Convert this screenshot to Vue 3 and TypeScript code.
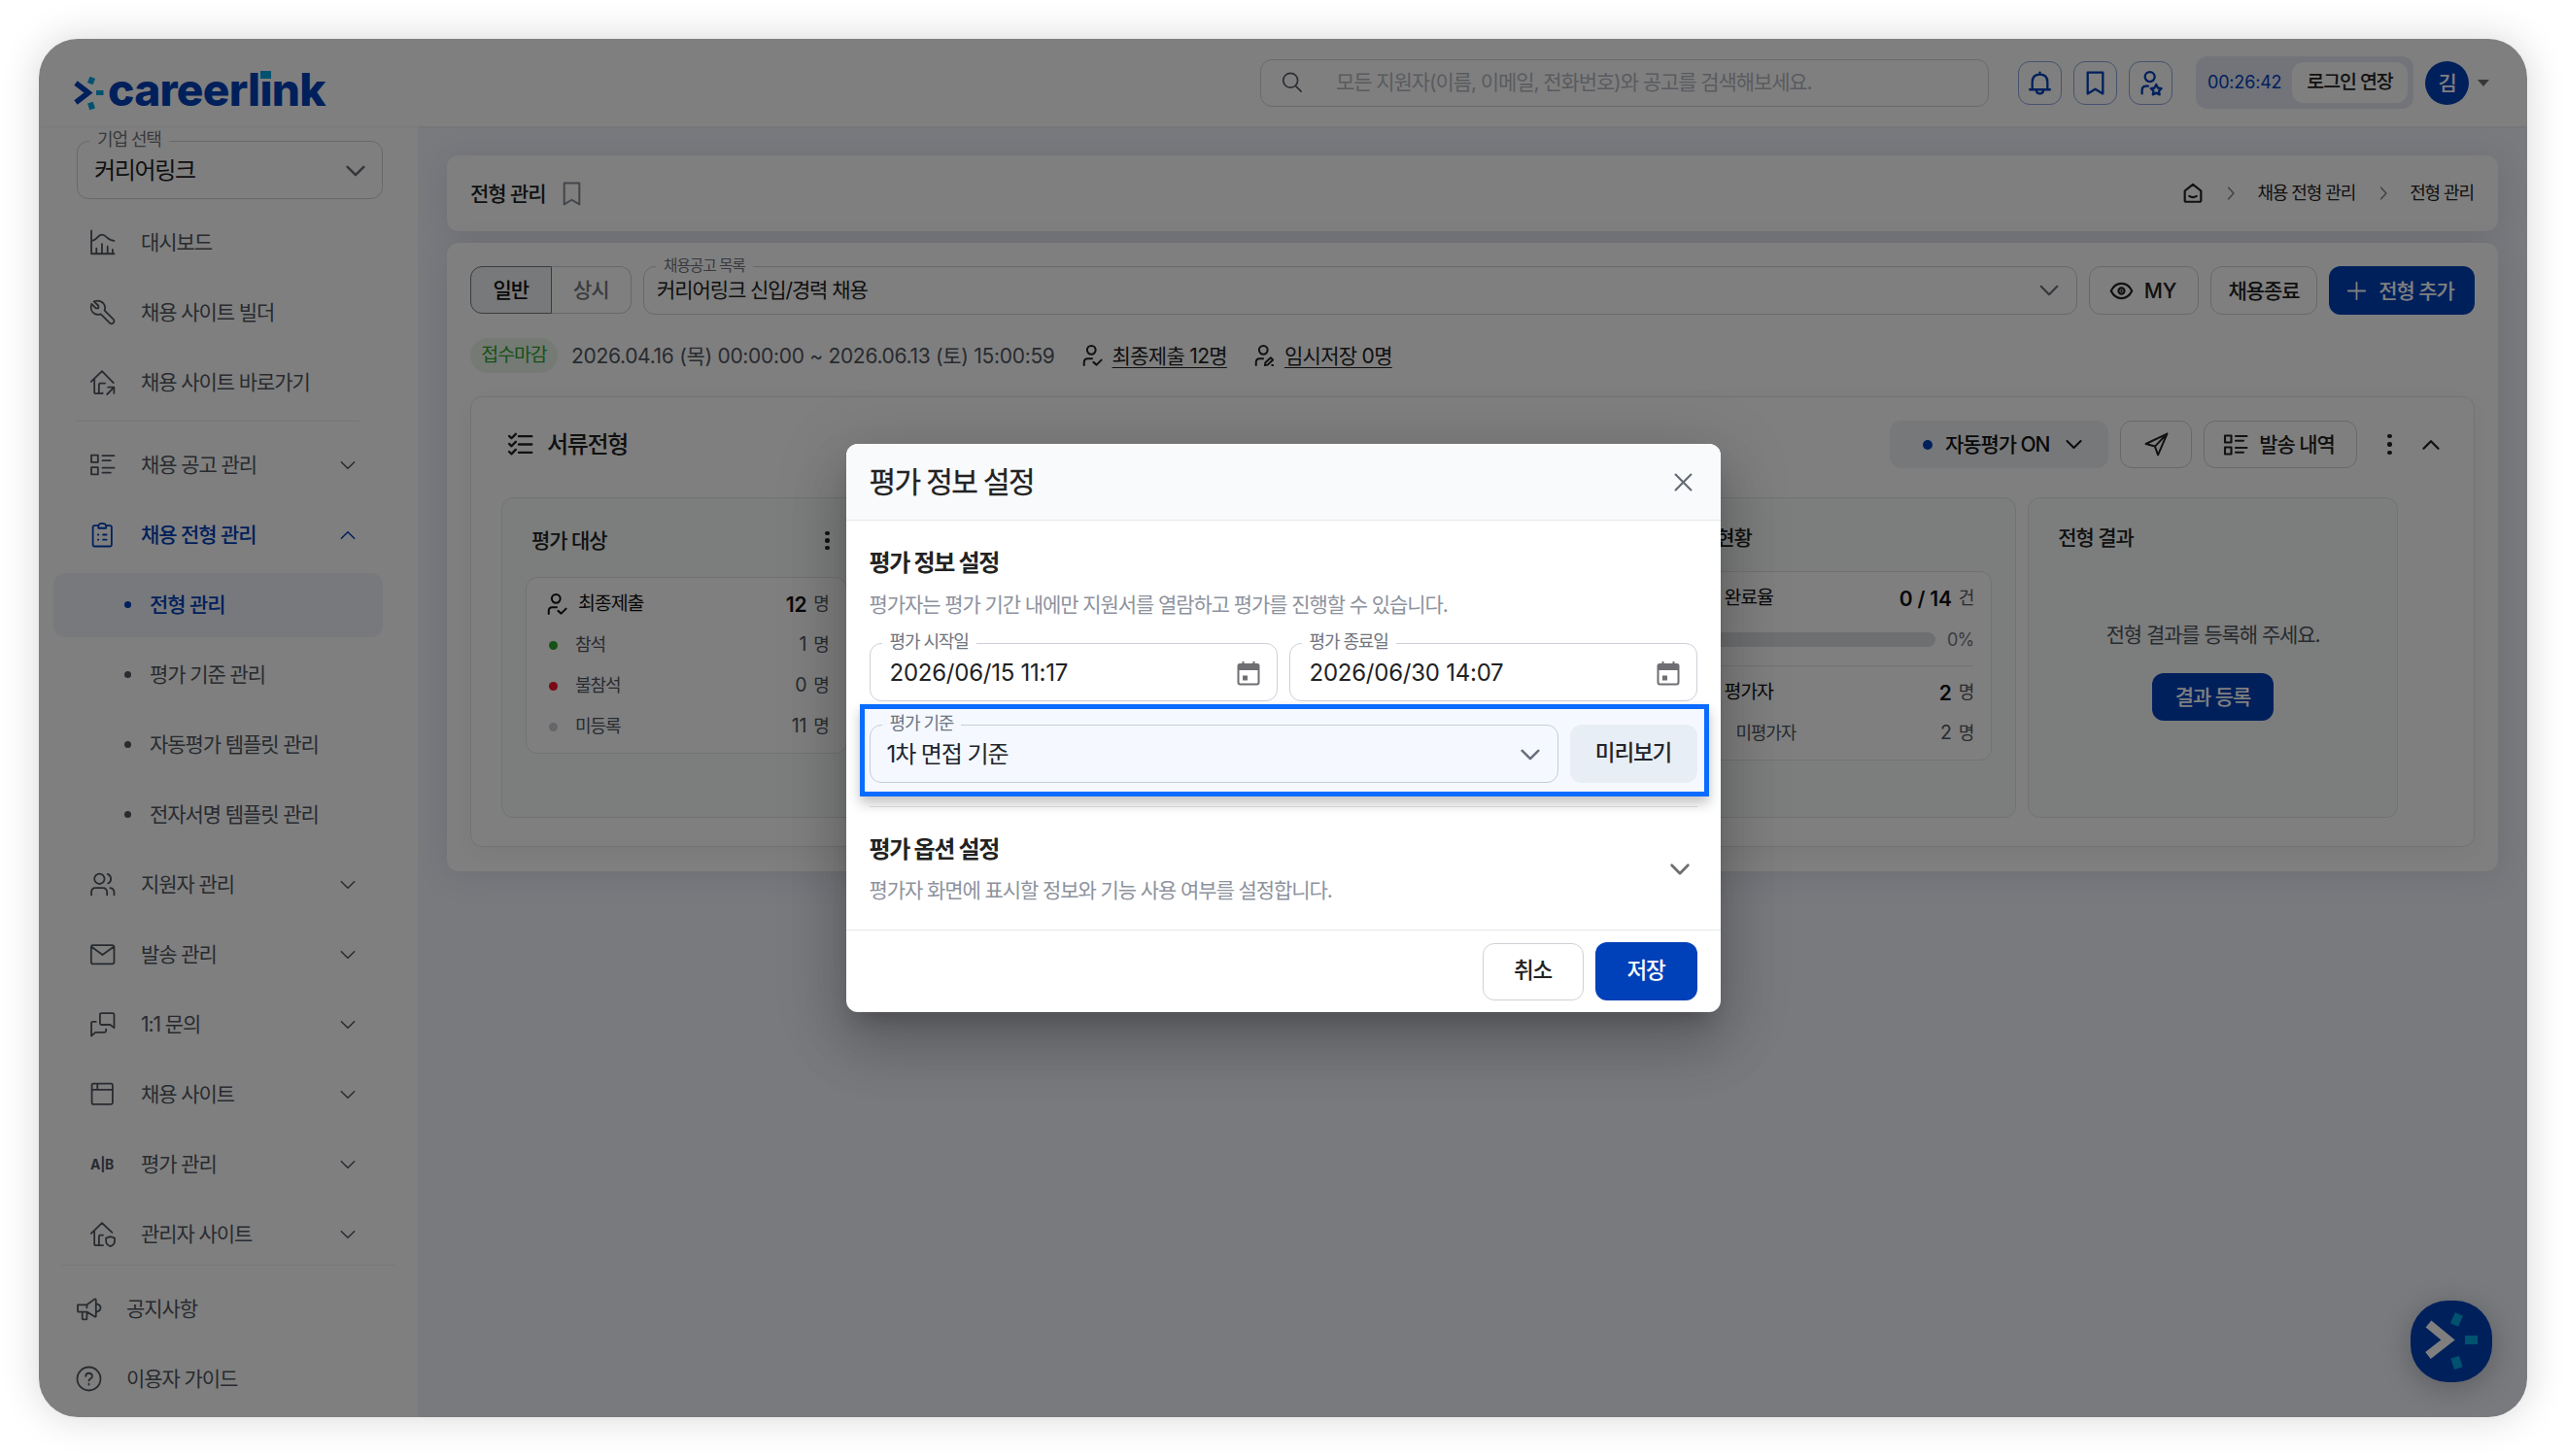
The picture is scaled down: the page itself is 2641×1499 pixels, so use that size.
<script setup lang="ts">
import { h } from 'vue'

interface MenuItem {
  label: string
  icon?: string
  arrow?: 'down' | 'up'
  active?: boolean
}

const icons: Record<string, string> = {
  chart: 'M1 .5V23.300H23.500M1.500 10.500C6 10.500 7 4.500 11.500 4.500S17 10.500 23.500 10.500M6 23V18M11.500 23V13.500M17 23V16M22 23V19',
  wrench: 'M3.500 1.200L8 5.500V8H5.500L1.200 3.800C-.2 8 1 12 4.500 13.600C6.500 14.500 8.600 14.500 10.300 13.800L19 22.500C20 23.500 21.700 23.500 22.700 22.500C23.700 21.500 23.700 19.800 22.700 18.900L14 10.200C14.900 8 14.700 5.500 13 3.300C10.600 .6 7 0 3.500 1.200Z',
  homeLink: 'M.8 11.500L11.500 1L22.800 12.500M4 9V21.500Q4 23.200 5.500 23.200H12V22.500M8.500 23V14.500Q8.500 13 10 13H14.500M16.500 24L23 17.300M17.500 17H23.400V23',
  list: 'M1 2.500H7.500V9.500H1ZM1 14.500H7.500V21.500H1ZM12 3H23.500M12 7.800H20M12 15H23.500M12 19.800H20',
  clipboard: 'M8 3H4Q2.500 3 2.500 4.500V22Q2.500 23.500 4 23.500H19.500Q21 23.500 21 22V4.500Q21 3 19.500 3H15.500M8 3.300Q8 .8 11.750 .8T15.500 3.300V5.500H8ZM7.500 12H8M12.500 12H16M7.500 17H8M12.500 17H16',
  users: 'M14 6.500A5 5 0 1 1 4 6.500A5 5 0 0 1 14 6.500ZM1 22.500V20Q1 15.500 5 15.500H12Q16.500 15.500 16.500 20V22.500M17 1.800A5 5 0 0 1 17.500 11M19.500 15.500Q23.500 16 23.500 20V22.500',
  mail: 'M2.500 3H21.500Q23.500 3 23.500 5V19.500Q23.500 21.500 21.500 21.500H2.500Q.8 21.500 .8 19.500V5Q.8 3 2.500 3ZM1.200 4.500L12 12.500L23 4.500',
  chat: 'M11 1H22Q23.500 1 23.500 2.500V15.500L19.500 12.500H11Q9.500 12.500 9.500 11V2.500Q9.500 1 11 1ZM5.500 9.500H2.500Q1 9.500 1 11V23.500L5 20H14Q15.500 20 15.500 18.500V17',
  windowed: 'M3 1.500H20.500Q22 1.500 22 3V20.500Q22 22 20.500 22H3Q1.500 22 1.500 20.500V3Q1.500 1.500 3 1.500ZM1.500 7.500H22M7 1.500V7.500',
  homeShield: 'M.8 11.500L11.500 1L21.500 10.500M4 9V21.500Q4 23.200 5.500 23.200H12.500M8.500 23V14.500Q8.500 13 10 13H12.500M15.500 16L19.800 14.500L24 16V19Q24 22.500 19.800 24.200Q15.500 22.500 15.500 19Z',
  speaker: 'M1 8H10L17.500 2.500Q19 1.800 19 3.500V19Q19 20.500 17.500 19.500L10 15H2Q1 15 1 14ZM5.500 15V21.500Q5.500 22.500 6.500 22.500H9Q10 22.500 10 21.500V15M10 8V11M19.500 7Q23.500 8 23.500 11T19.500 15',
  help: 'M23.500 12A11.500 11.500 0 1 1 .5 12A11.500 11.500 0 0 1 23.500 12ZM8.800 9.500Q9 6.500 12 6.500T15.300 9.300Q15.300 11 13.500 12Q12 13 12 14M12 17V17.800',
  bell: 'M2 18.500H22M4.500 18.500V11Q4.500 3.500 12 3.500T19.500 11V18.500M12 1.500V3.500M8.500 19Q8.500 22.500 12 22.500T15.500 19',
  bookmark: 'M4.500 1.500H19.500V22.500L12 18L4.500 22.500Z',
  userStar: 'M16 5.800A4.800 4.800 0 1 1 6.400 5.800A4.800 4.800 0 0 1 16 5.800ZM3.500 22.500V19Q3.500 15 8 15H9.500M17.500 13.500L19.200 16.800L22.800 17.300L20.200 19.800L20.800 23.400L17.500 21.700L14.200 23.400L14.800 19.800L12.200 17.300L15.800 16.800Z',
  userCheck: 'M16 5.800A4.800 4.800 0 1 1 6.400 5.800A4.800 4.800 0 0 1 16 5.800ZM3 23V19.500Q3 15.500 7 15.500H12M13.500 19.500L17 22.500L22.500 17',
  userEdit: 'M16 5.800A4.800 4.800 0 1 1 6.400 5.800A4.800 4.800 0 0 1 16 5.800ZM3 23V19.500Q3 15.500 7 15.500H11M13 23L13.500 20L19.500 14.500L22 17L16 22.500ZM21 23H22',
  search: 'M19 10A8.500 8.500 0 1 1 2 10A8.500 8.500 0 0 1 19 10ZM16.500 16.500L23 23',
  home: 'M2 9L12 1L22 9V21Q22 22.500 20.500 22.500H3.500Q2 22.500 2 21ZM7.500 15.500Q12 18.500 16.500 15.500',
  eye: 'M.8 12C6 1.500 18 1.500 23.200 12C18 22.500 6 22.500 .8 12ZM15.200 12A3.200 3.200 0 1 1 8.800 12A3.200 3.200 0 0 1 15.200 12ZM12 11.500V12.500',
  plus: 'M12 1V23M1 12H23',
  checks: 'M1 3.800L3.300 6L7.500 1.800M1 11.500L3.300 13.700L7.500 9.500M1 19.200L3.300 21.400L7.500 17.200M10.500 4H23.300M10.500 12H23.300M10.500 20H23.300',
  send: 'M1.500 11.500L22.500 1.500L13.500 22.500L10.500 14ZM10.500 14L22.500 1.500',
  close: 'M2 2L22 22M22 2L2 22',
  down: 'M2 7L12 17L22 7',
  up: 'M2 17L12 7L22 17',
  right: 'M8 2L17 12L8 22'
}

const Icon = (p: { name: string; size?: number; weight?: number }) => {
  const size = p.size ?? 25
  return h(
    'svg',
    {
      width: size,
      height: size,
      viewBox: '0 0 24 24',
      fill: 'none',
      stroke: 'currentColor',
      'stroke-width': ((p.weight ?? 1.8) * 24) / size,
      'stroke-linecap': 'round',
      'stroke-linejoin': 'round',
      style: { display: 'block', flex: 'none', overflow: 'visible' }
    },
    [h('path', { d: icons[p.name] })]
  )
}
Icon.props = ['name', 'size', 'weight']

const topMenu: MenuItem[] = [
  { label: '대시보드', icon: 'chart' },
  { label: '채용 사이트 빌더', icon: 'wrench' },
  { label: '채용 사이트 바로가기', icon: 'homeLink' }
]
const recruitMenu: MenuItem[] = [
  { label: '채용 공고 관리', icon: 'list', arrow: 'down' },
  { label: '채용 전형 관리', icon: 'clipboard', arrow: 'up', active: true }
]
const subMenu: MenuItem[] = [
  { label: '전형 관리', active: true },
  { label: '평가 기준 관리' },
  { label: '자동평가 템플릿 관리' },
  { label: '전자서명 템플릿 관리' }
]
const manageMenu: MenuItem[] = [
  { label: '지원자 관리', icon: 'users', arrow: 'down' },
  { label: '발송 관리', icon: 'mail', arrow: 'down' },
  { label: '1:1 문의', icon: 'chat', arrow: 'down' },
  { label: '채용 사이트', icon: 'windowed', arrow: 'down' },
  { label: '평가 관리', icon: 'ab', arrow: 'down' },
  { label: '관리자 사이트', icon: 'homeShield', arrow: 'down' }
]
const footMenu: MenuItem[] = [
  { label: '공지사항', icon: 'speaker' },
  { label: '이용자 가이드', icon: 'help' }
]
const attendance = [
  { label: '참석', count: 1, color: '#2da32d' },
  { label: '불참석', count: 0, color: '#f5142d' },
  { label: '미등록', count: 11, color: '#c9ccd3' }
]
const dateFields = [
  { label: '평가 시작일', value: '2026/06/15 11:17' },
  { label: '평가 종료일', value: '2026/06/30 14:07' }
]
</script>

<template>
  <div class="stage">
    <div class="window">
      <header class="header">
        <div class="logo">
          <svg class="logo-mark" width="33" height="36" viewBox="0 0 33 36">
            <path d="M3 7.500L16 17.500L3 27.500" fill="none" stroke="#0040b8" stroke-width="5.500" />
            <g fill="#00a5de">
              <rect x="-3" y="-3.500" width="6" height="7" transform="translate(19 5) rotate(22)" />
              <rect x="24" y="15" width="7.500" height="5" />
              <rect x="-3" y="-3.500" width="6" height="7" transform="translate(19 31) rotate(-18)" />
            </g>
          </svg>
          <span class="logo-text">careerl<span class="logo-i">i</span>nk</span>
        </div>
        <div class="search">
          <Icon name="search" :size="21" :weight="1.7" />
          <span>모든 지원자(이름, 이메일, 전화번호)와 공고를 검색해보세요.</span>
        </div>
        <div class="head-icons">
          <button v-for="n in ['bell', 'bookmark', 'userStar']" :key="n"><Icon :name="n" :size="25" :weight="2.3" /></button>
        </div>
        <div class="timer">
          <span class="time num">00:26:42</span>
          <button>로그인 연장</button>
        </div>
        <div class="avatar">김</div>
        <i class="caret"></i>
      </header>

      <div class="body">
        <aside class="sidebar">
          <div class="menu-scroll">
            <div class="field company">
              <span class="field-label">기업 선택</span>
              <span class="field-value">커리어링크</span>
              <Icon name="down" :size="20" :weight="2.6" />
            </div>
            <nav class="menu">
              <div v-for="m in topMenu" :key="m.label" class="item">
                <Icon :name="m.icon!" /><span>{{ m.label }}</span>
              </div>
              <hr />
              <div v-for="m in recruitMenu" :key="m.label" class="item" :class="{ active: m.active }">
                <Icon :name="m.icon!" /><span>{{ m.label }}</span>
                <Icon class="arrow" :name="m.arrow!" :size="16" :weight="1.5" />
              </div>
              <div v-for="m in subMenu" :key="m.label" class="item sub" :class="{ active: m.active, picked: m.active }">
                <i class="dot"></i><span>{{ m.label }}</span>
              </div>
              <div v-for="m in manageMenu" :key="m.label" class="item">
                <span v-if="m.icon === 'ab'" class="ab">A|B</span>
                <Icon v-else :name="m.icon!" />
                <span>{{ m.label }}</span>
                <Icon class="arrow" :name="m.arrow!" :size="16" :weight="1.5" />
              </div>
            </nav>
          </div>
          <nav class="foot">
            <div v-for="m in footMenu" :key="m.label" class="item">
              <Icon :name="m.icon!" /><span>{{ m.label }}</span>
            </div>
          </nav>
        </aside>

        <main class="main">
          <section class="card crumbs">
            <h1>전형 관리</h1>
            <Icon class="mark" name="bookmark" :size="25" :weight="2" />
            <div class="trail">
              <Icon name="home" :size="20" :weight="2.2" />
              <Icon class="sep" name="right" :size="14" :weight="1.5" />
              <span>채용 전형 관리</span>
              <Icon class="sep" name="right" :size="14" :weight="1.5" />
              <span>전형 관리</span>
            </div>
          </section>

          <section class="card content">
            <div class="toolbar">
              <div class="toggle"><span class="on">일반</span><span>상시</span></div>
              <div class="field posting">
                <span class="field-label">채용공고 목록</span>
                <span class="field-value">커리어링크 신입/경력 채용</span>
                <Icon name="down" :size="20" :weight="2.2" />
              </div>
              <button class="btn my"><Icon name="eye" :size="23" :weight="2.2" /><span class="num">MY</span></button>
              <button class="btn end">채용종료</button>
              <button class="btn primary add"><Icon name="plus" :size="19" :weight="1.8" />전형 추가</button>
            </div>

            <div class="status">
              <span class="badge">접수마감</span>
              <span class="period">2026.04.16 (목) 00:00:00 ~ 2026.06.13 (토) 15:00:59</span>
              <Icon name="userCheck" :size="22" :weight="2" />
              <u>최종제출 12명</u>
              <Icon name="userEdit" :size="22" :weight="2" />
              <u>임시저장 0명</u>
            </div>

            <div class="step">
              <div class="step-head">
                <Icon name="checks" :size="25" :weight="2.4" />
                <h2>서류전형</h2>
                <div class="auto"><i class="dot"></i><span>자동평가 ON</span><Icon name="down" :size="17" :weight="1.9" /></div>
                <button class="btn send"><Icon name="send" :size="25" :weight="2" /></button>
                <button class="btn history"><Icon name="list" :size="24" :weight="2.1" />발송 내역</button>
                <span class="kebab"><i></i><i></i><i></i></span>
                <Icon name="up" :size="18" :weight="2.3" />
              </div>

              <div class="panels">
                <div class="panel">
                  <div class="panel-title tall">평가 대상<span class="kebab small"><i></i><i></i><i></i></span></div>
                  <div class="box">
                    <div class="row lead">
                      <Icon name="userCheck" :size="22" :weight="2" />
                      <span>최종제출</span><strong>12</strong><em>명</em>
                    </div>
                    <div v-for="a in attendance" :key="a.label" class="row">
                      <i class="state" :style="{ background: a.color }"></i>
                      <span>{{ a.label }}</span><strong>{{ a.count }}</strong><em>명</em>
                    </div>
                  </div>
                </div>
                <div class="panel"></div>
                <div class="panel"></div>
                <div class="panel">
                  <div class="panel-title">평가 현황</div>
                  <div class="box">
                    <div class="row lead"><i class="gap"></i><span>완료율</span><strong>0 / 14</strong><em>건</em></div>
                    <div class="row progress"><div class="bar"></div><span class="pct">0%</span></div>
                    <hr />
                    <div class="row lead"><i class="gap"></i><span>평가자</span><strong>2</strong><em>명</em></div>
                    <div class="row"><i class="gap wide"></i><span>미평가자</span><strong>2</strong><em>명</em></div>
                  </div>
                </div>
                <div class="panel result">
                  <div class="panel-title">전형 결과</div>
                  <p>전형 결과를 등록해 주세요.</p>
                  <button class="btn primary">결과 등록</button>
                </div>
              </div>
            </div>
          </section>
        </main>
      </div>

      <div class="fab">
        <svg width="84" height="84" viewBox="0 0 84 84">
          <path d="M18.500 24L38.500 40.500L18 56.500" fill="none" stroke="#fff" stroke-width="9" />
          <g fill="#00a5de">
            <rect x="-4.500" y="-6" width="9" height="12" transform="translate(47.500 19.500) rotate(24)" />
            <rect x="56" y="36" width="13" height="9" />
            <rect x="-4.500" y="-6" width="9" height="12" transform="translate(47.500 64) rotate(-18)" />
          </g>
        </svg>
      </div>

      <div class="backdrop">
        <section class="modal">
          <header class="modal-head"><h2>평가 정보 설정</h2><Icon name="close" :size="19" :weight="2.2" /></header>
          <div class="modal-body">
            <h3>평가 정보 설정</h3>
            <p>평가자는 평가 기간 내에만 지원서를 열람하고 평가를 진행할 수 있습니다.</p>
            <div class="dates">
              <div v-for="d in dateFields" :key="d.label" class="field date">
                <span class="field-label">{{ d.label }}</span>
                <span class="field-value num">{{ d.value }}</span>
                <svg class="calendar" width="24" height="27" viewBox="0 0 24 27">
                  <path d="M3 4H21Q22.500 4 22.500 5.500V22.500Q22.500 24.500 20.500 24.500H3.500Q1.500 24.500 1.500 22.500V5.500Q1.500 4 3 4Z" fill="none" stroke="#6f6f73" stroke-width="2" />
                  <path d="M1.500 4H22.500V10H1.500ZM5.500 1H7.500V5H5.500ZM16.500 1H18.500V5H16.500ZM6 15.500H11V20.500H6Z" fill="#6f6f73" />
                </svg>
              </div>
            </div>
            <div class="criteria">
              <div class="field">
                <span class="field-label">평가 기준</span>
                <span class="field-value">1차 면접 기준</span>
                <Icon name="down" :size="20" :weight="2.6" />
              </div>
              <button class="preview">미리보기</button>
              <div class="focus-ring"></div>
            </div>
            <div class="options">
              <div>
                <h3>평가 옵션 설정</h3>
                <p>평가자 화면에 표시할 정보와 기능 사용 여부를 설정합니다.</p>
              </div>
              <Icon name="down" :size="20" :weight="2.8" />
            </div>
          </div>
          <footer class="modal-foot">
            <button class="cancel">취소</button>
            <button class="save">저장</button>
          </footer>
        </section>
      </div>
    </div>
  </div>
</template>

<style>
body {
  margin: 0;
  background: #fff;
}
</style>

<style scoped>
.stage {
  position: relative;
  box-sizing: border-box;
  width: 2641px;
  height: 1499px;
  padding: 40px;
  background: #fff;
  font-family: Inter, 'Noto Sans CJK KR', sans-serif;
  font-size: 21px;
  line-height: 1;
  letter-spacing: -0.052em;
  color: #222;
  white-space: nowrap;
}
.stage::before {
  content: '';
  position: absolute;
  inset: 40px;
  border-radius: 40px;
  box-shadow: 0 0 40px rgba(0, 0, 0, 0.16);
}
.stage * {
  box-sizing: border-box;
}
h1, h2, h3, p {
  margin: 0;
}
button {
  margin: 0;
  padding: 0;
  border: 0;
  background: none;
  font: inherit;
  letter-spacing: inherit;
  color: inherit;
}
.num {
  letter-spacing: -0.01em;
}
.window {
  position: relative;
  z-index: 1;
  display: flex;
  flex-direction: column;
  width: 2561px;
  height: 1419px;
  border-radius: 40px;
  overflow: hidden;
  background: #fff;
}

/* header */
.header {
  position: relative;
  z-index: 1;
  display: flex;
  align-items: center;
  flex: none;
  height: 90px;
  padding-left: 35px;
  box-shadow: 0 1px 3px rgba(0, 0, 0, 0.06);
}
.header > * {
  flex: none;
}
.logo {
  display: flex;
  align-items: center;
  width: 1222px;
  padding-top: 22px;
}
.logo-text {
  margin: 0 0 8px 3px;
  font-size: 46px;
  font-weight: 800;
  letter-spacing: -0.015em;
  color: #0040b8;
}
.logo-i {
  position: relative;
}
.logo-i::after {
  content: '';
  position: absolute;
  left: 1px;
  top: 9px;
  width: 11px;
  height: 11px;
  background: linear-gradient(#00a5de 8px, #fff 8px);
}
.search {
  display: flex;
  align-items: center;
  width: 750px;
  height: 49px;
  padding: 0 0 1px 21px;
  border: 1px solid #d3d5da;
  border-radius: 12px;
  color: #b4b7bf;
}
.search svg {
  color: #565c68;
}
.search span {
  margin-left: 35px;
}
.head-icons {
  display: flex;
  gap: 12px;
  margin-left: 30px;
  color: #0040b8;
}
.head-icons button {
  display: grid;
  place-items: center;
  width: 45px;
  height: 45px;
  border: 1px solid #8ba6de;
  border-radius: 12px;
}
.timer {
  display: flex;
  align-items: center;
  justify-content: space-between;
  width: 224px;
  height: 54px;
  margin-left: 24px;
  padding: 0 6px 0 12px;
  border-radius: 12px;
  background: #e4e9f5;
}
.time {
  font-size: 18px;
  color: #0040b8;
}
.timer button {
  width: 119px;
  height: 42px;
  border-radius: 12px;
  background: #fff;
  font-size: 19.500px;
  font-weight: 500;
}
.avatar {
  display: grid;
  place-items: center;
  width: 45px;
  height: 45px;
  margin-left: 12px;
  border-radius: 50%;
  background: #0040b8;
  color: #fff;
  font-weight: 500;
}
.caret {
  margin-left: 9px;
  border: 6px solid transparent;
  border-top: 7px solid #707070;
  border-bottom: 0;
}

/* sidebar */
.body {
  display: flex;
  flex: 1;
  min-height: 0;
}
.sidebar {
  display: flex;
  flex-direction: column;
  width: 390px;
  flex: none;
}
.menu-scroll {
  height: 1172px;
  overflow: hidden;
  padding-top: 15px;
}
.field {
  position: relative;
  display: flex;
  align-items: center;
  justify-content: space-between;
  height: 60px;
  padding: 3px 18px 0 17px;
  border: 1px solid #cdd0d8;
  border-radius: 12px;
  font-size: 24px;
}
.field > svg {
  color: #6b6f78;
}
.field-label {
  position: absolute;
  left: 12px;
  top: -11px;
  padding: 0 8px;
  background: #fff;
  font-size: 18px;
  color: #70757f;
}
.company {
  width: 315px;
  margin-left: 39px;
  padding: 1px 17px 0 17px;
}
.company .field-value {
  letter-spacing: -0.056em;
}
.menu {
  display: flex;
  flex-direction: column;
  gap: 6px;
  padding: 12px 36px 0 15px;
}
.menu hr {
  width: 291px;
  height: 1px;
  margin: 0 0 6px 24px;
  border: 0;
  background: #e9eaee;
}
.item {
  display: flex;
  align-items: center;
  flex: none;
  height: 66px;
  padding: 0 28px 1px 38px;
  border-radius: 12px;
  color: #50565f;
}
.item > span {
  margin-left: 27px;
}
.item > span.ab {
  width: 25px;
  margin-left: 0;
  font-size: 14px;
  font-weight: 700;
  letter-spacing: -0.02em;
}
.item .arrow {
  margin-left: auto;
}
.item.active {
  color: #0040b8;
  font-weight: 500;
}
.item.picked {
  background: #f0f2fa;
}
.item.sub {
  padding-left: 73px;
}
.sub .dot {
  width: 7px;
  height: 7px;
  border-radius: 50%;
  background: currentColor;
}
.item.sub span {
  margin-left: 19px;
}
.foot {
  display: flex;
  flex-direction: column;
  gap: 6px;
  margin: 0 24px;
  padding-top: 12px;
  border-top: 1px solid #eeeff2;
}
.foot .item {
  padding-left: 15px;
}
.foot .item > span {
  margin-left: 26px;
}

/* main */
.main {
  flex: 1;
  padding: 30px;
  background: #f1f4fc;
}
.card {
  border-radius: 12px;
  background: #fff;
  box-shadow: 0 4px 34px rgba(50, 56, 75, 0.12);
}
.crumbs {
  display: flex;
  align-items: center;
  height: 78px;
  padding: 0 25px 0 24px;
}
.crumbs h1 {
  font-size: 21px;
  font-weight: 500;
}
.mark {
  margin-left: 15px;
  color: #868b94;
}
.trail {
  display: flex;
  align-items: center;
  margin-left: auto;
  font-size: 18px;
}
.sep {
  margin: 0 20px 0 22px;
  color: #80858e;
}
.content {
  height: 647px;
  margin-top: 12px;
  padding: 24px;
}
.toolbar {
  display: flex;
  gap: 12px;
}
.toggle {
  display: flex;
  width: 166px;
  height: 49px;
}
.toggle span {
  display: grid;
  place-items: center;
  flex: 1;
  border: 1px solid #cfd1d6;
  border-left: 0;
  border-radius: 0 12px 12px 0;
  color: #757983;
  font-weight: 500;
}
.toggle .on {
  border: 1px solid #757983;
  border-radius: 12px 0 0 12px;
  background: #f0f2f6;
  color: #111;
}
.posting {
  flex: 1;
  height: 50px;
  padding: 0 18px 1px 13px;
  font-size: 21px;
}
.posting .field-label {
  font-size: 15.750px;
  top: -9px;
}
.btn {
  display: flex;
  align-items: center;
  justify-content: center;
  height: 50px;
  border: 1px solid #cfd1d6;
  border-radius: 12px;
  font-weight: 500;
}
.btn.primary {
  border: 0;
  background: #0040b8;
  color: #fff;
}
.my {
  width: 113px;
  gap: 12px;
  padding-right: 1px;
}
.end {
  width: 110px;
}
.add {
  width: 150px;
  gap: 13px;
  padding-right: 2px;
}
.status {
  display: flex;
  align-items: center;
  height: 36px;
  margin-top: 24px;
}
.badge {
  display: grid;
  place-items: center;
  width: 90px;
  height: 36px;
  border-radius: 18px;
  background: #eaf5ea;
  color: #2da32d;
  font-size: 19.500px;
}
.period {
  margin-left: 14px;
  color: #50565f;
  letter-spacing: -0.0145em;
}
.status svg {
  margin: 0 10px 0 27px;
}
.status u {
  letter-spacing: -0.033em;
  text-underline-offset: 4px;
  text-decoration-thickness: 1px;
}
.step {
  height: 464px;
  margin-top: 24px;
  padding: 24px 29px 24px 31px;
  border: 1px solid #e3e5ea;
  border-radius: 12px;
  box-shadow: 0 6px 24px rgba(50, 56, 75, 0.06);
}
.step-head {
  display: flex;
  align-items: center;
  height: 49px;
  padding: 0 6px 0 7px;
}
.step-head h2 {
  margin-left: 15px;
  font-size: 24px;
  font-weight: 500;
  letter-spacing: -0.056em;
}
.step-head .btn {
  height: 49px;
  margin-left: 12px;
}
.auto {
  display: flex;
  align-items: center;
  width: 225px;
  height: 49px;
  margin-left: auto;
  padding-left: 34px;
  border-radius: 12px;
  background: #eef0f5;
  color: #111;
  font-weight: 500;
}
.auto .dot {
  width: 10px;
  height: 10px;
  margin-right: 13px;
  border-radius: 50%;
  background: #0040b8;
}
.auto svg {
  margin-left: 17px;
}
.send {
  width: 74px;
}
.history {
  width: 158px;
  gap: 12px;
  padding-right: 2px;
}
.kebab {
  display: flex;
  flex-direction: column;
  align-items: center;
  gap: 4px;
  width: 5px;
  margin: 0 31px;
}
.kebab i {
  width: 4.500px;
  height: 4.500px;
  border-radius: 50%;
  background: #222;
}
.kebab.small {
  gap: 3px;
  margin: 0 18px 0 auto;
}
.panels {
  display: flex;
  gap: 12px;
  width: 1952px;
  height: 330px;
  margin-top: 30px;
}
.panel {
  flex: 1;
  padding: 24px;
  border: 1px solid #e2e5e6;
  border-radius: 12px;
  background: #f9fbfb;
}
.panel-title {
  display: flex;
  align-items: center;
  height: 33px;
  padding-left: 6px;
  margin-bottom: 18px;
  font-weight: 500;
}
.panel-title.tall {
  height: 39px;
}
.box {
  padding: 6px 18px;
  border: 1px solid #e2e4e9;
  border-radius: 12px;
  background: #fff;
}
.row {
  display: flex;
  align-items: center;
  height: 42px;
  font-size: 18px;
  color: #50565f;
}
.row.lead {
  font-size: 19.500px;
  font-weight: 400;
  color: #111;
}
.row > svg {
  margin: 0 11px 0 2px;
}
.state {
  width: 9px;
  height: 9px;
  margin: 0 18px 0 5px;
  border-radius: 50%;
}
.gap {
  width: 36px;
}
.gap.wide {
  width: 48px;
}
.row strong {
  margin-left: auto;
  font-size: 19.500px;
  font-weight: 400;
  letter-spacing: -0.01em;
}
.row.lead strong {
  font-size: 21px;
  font-weight: 600;
}
.row em {
  margin-left: 7px;
  font-style: normal;
  font-size: 18px;
  font-weight: 400;
  color: #50565f;
}
.bar {
  flex: 1;
  height: 15px;
  margin-right: 12px;
  border-radius: 8px;
  background: #dddee2;
}
.pct {
  color: #757983;
  letter-spacing: -0.05em;
}
.progress {
  height: 43px;
}
.box hr {
  height: 1px;
  margin: 5px 0 6px;
  border: 0;
  background: #e2e4e9;
}
.result {
  display: flex;
  flex-direction: column;
}
.result p {
  margin-top: 55px;
  text-align: center;
  color: #50565f;
}
.result .btn {
  width: 125px;
  height: 49px;
  margin: 29px auto 0;
}
.fab {
  position: absolute;
  right: 36px;
  bottom: 36px;
  width: 84px;
  height: 84px;
  border-radius: 38px;
  background: #0040b8;
  box-shadow: 0 6px 30px rgba(0, 0, 0, 0.24);
}

/* dialog */
.backdrop {
  position: absolute;
  inset: 0;
  z-index: 2;
  display: flex;
  align-items: center;
  justify-content: center;
  background: rgba(0, 0, 0, 0.5);
}
.modal {
  width: 900px;
  height: 585px;
  display: flex;
  flex-direction: column;
  border-radius: 12px;
  background: #fff;
  box-shadow: 0 16px 22px -10px rgba(0, 0, 0, 0.2), 0 36px 57px 4px rgba(0, 0, 0, 0.14), 0 14px 69px 12px rgba(0, 0, 0, 0.12);
}
.modal-head {
  display: flex;
  align-items: center;
  justify-content: space-between;
  height: 79px;
  padding: 0 29px 0 24px;
  border-bottom: 1px solid #e5e7eb;
  border-radius: 12px 12px 0 0;
  background: #f9fafc;
}
.modal-head svg {
  color: #656b76;
}
.modal-head h2 {
  font-size: 30px;
  font-weight: 400;
  letter-spacing: -0.054em;
  -webkit-text-stroke: 0.3px currentColor;
}
.modal-body {
  flex: 1;
  padding: 32px 24px 0;
}
.modal h3 {
  font-size: 24px;
  font-weight: 700;
  letter-spacing: -0.053em;
}
.modal p {
  margin-top: 20px;
  color: #8d929d;
}
.dates {
  display: flex;
  gap: 12px;
  margin-top: 29px;
}
.date {
  flex: 1;
  padding: 2px 17px 0 20px;
}
.criteria {
  position: relative;
  display: flex;
  gap: 12px;
  margin-top: 24px;
}
.criteria .field {
  flex: 1;
  padding-top: 1px;
}
.preview {
  width: 131px;
  height: 60px;
  padding-bottom: 2px;
  border-radius: 12px;
  background: #f2f4f6;
  font-size: 22.500px;
  font-weight: 500;
}
.focus-ring {
  position: absolute;
  inset: -21px -12px -14px -10px;
  border: 5px solid #0a6cff;
  background: rgba(30, 105, 255, 0.045);
  box-shadow: 0 7px 12px rgba(0, 0, 0, 0.24);
}
.options {
  display: flex;
  align-items: center;
  justify-content: space-between;
  margin-top: 24px;
  padding: 32px 8px 0 0;
  border-top: 1px solid #e2e2e4;
}
.options p {
  margin-top: 19px;
}
.options svg {
  color: #6f6f73;
  margin-bottom: 1px;
}
.modal-foot {
  display: flex;
  align-items: center;
  justify-content: flex-end;
  gap: 12px;
  height: 85px;
  padding-right: 24px;
  border-top: 1px solid #e5e7eb;
  font-size: 22.500px;
  font-weight: 500;
}
.cancel {
  width: 104px;
  height: 59px;
  padding-bottom: 1px;
  border: 1px solid #cfd1d6;
  border-radius: 12px;
}
.save {
  width: 105px;
  height: 60px;
  padding-bottom: 2px;
  border-radius: 12px;
  background: #0040b8;
  color: #fff;
}
</style>
